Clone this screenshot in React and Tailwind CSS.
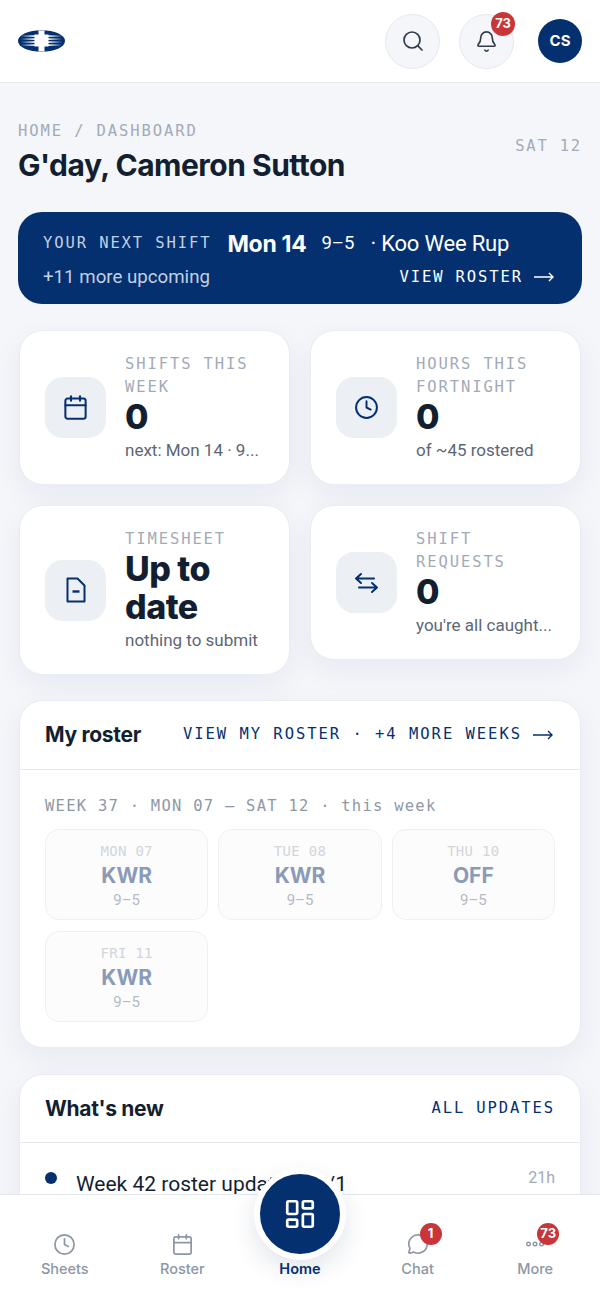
import React from "react";
import { Search, Bell, Calendar, Clock, LayoutDashboard, MessageCircle } from "lucide-react";

const mono = "font-['DejaVu_Sans_Mono',monospace]";
const sans = "font-['Roboto',sans-serif]";
const head = "font-['Inter',sans-serif]";

function Arrow({ className }) {
  return (
    <svg width="20" height="12" viewBox="0 0 20 12" fill="none" stroke="currentColor" strokeWidth="1.4" className={className}>
      <path d="M0 6h19M15 2l4 4-4 4" />
    </svg>
  );
}

function SwapIcon() {
  return (
    <svg width="25" height="22" viewBox="0 0 25 22" fill="none" stroke="#043070" strokeWidth="2" strokeLinecap="round" strokeLinejoin="round">
      <path d="M7 2 2 6.5 7 11M2 6.5h18M18 11l5 4.5L18 20M23 15.5H5" />
    </svg>
  );
}

function FileIcon() {
  return (
    <svg width="20" height="26" viewBox="0 0 20 26" fill="none" stroke="#043070" strokeWidth="2">
      <path d="M1.5 1.5h10l7 7v16h-17z" strokeLinejoin="round" />
      <path d="M6.5 14.5h7" strokeWidth="2.4" />
    </svg>
  );
}

function Logo() {
  return (
    <svg width="47" height="22" viewBox="0 0 47 22">
      <defs>
        <linearGradient id="fade" x1="0" x2="1" y1="0" y2="0">
          <stop offset="0.06" stopColor="#ffffff" stopOpacity="0" />
          <stop offset="0.38" stopColor="#ffffff" />
          <stop offset="0.62" stopColor="#ffffff" />
          <stop offset="0.94" stopColor="#ffffff" stopOpacity="0" />
        </linearGradient>
      </defs>
      <ellipse cx="23.5" cy="11" rx="23.5" ry="10.8" fill="#043070" />
      <rect x="0" y="5.2" width="47" height="1.8" fill="url(#fade)" />
      <rect x="0" y="8.2" width="47" height="1.8" fill="url(#fade)" />
      <rect x="0" y="11.2" width="47" height="1.8" fill="url(#fade)" />
      <rect x="0" y="14.2" width="47" height="1.8" fill="url(#fade)" />
      <path d="M20.5 0.6h6v4h4v12h-4v4.8h-6v-4.8h-4v-12h4z" fill="#ffffff" />
    </svg>
  );
}

function Badge({ children, className }) {
  return (
    <span className={`absolute flex items-center justify-center rounded-full bg-[#c9363a] text-white font-bold text-[13px] ${head} ${className}`}>
      {children}
    </span>
  );
}

function Stat({ icon, label, value, sub }) {
  return (
    <div className="flex min-w-0 items-center gap-[19px] rounded-[24px] border border-[#e9ecf2] bg-white px-[25px] py-[22px] shadow-[0_10px_30px_rgba(20,40,80,0.06)]">
      <div className="flex h-[61px] w-[61px] shrink-0 items-center justify-center rounded-[18px] bg-[#eceff4]">{icon}</div>
      <div className="min-w-0 flex-1">
        <div className={`${mono} text-[15.5px] leading-[23px] tracking-[1.9px] text-[#a3aab7]`}>{label}</div>
        <div className={`${head} -mt-[1px] text-[34px] font-extrabold leading-[38px] tracking-[-0.5px] text-[#131f30]`}>{value}</div>
        <div className={`${sans} mt-[2px] whitespace-nowrap text-[17px] leading-[24px] text-[#5d6675]`}>{sub}</div>
      </div>
    </div>
  );
}

function Day({ d, c }) {
  return (
    <div className="flex h-[91px] flex-col items-center rounded-[14px] border border-[#eef0f3] bg-[#fcfcfd] pt-[11px]">
      <div className={`${mono} text-[14px] leading-[20px] tracking-[0.3px] text-[#d2d5db]`}>{d}</div>
      <div className={`${head} text-[21px] font-bold leading-[30px] text-[#8a9ab7]`}>{c}</div>
      <div className={`${sans} -mt-[1px] text-[15px] leading-[20px] text-[#b5bac3]`}>9–5</div>
    </div>
  );
}

function NavItem({ icon, label, active, badge }) {
  return (
    <div className="relative flex flex-col items-center">
      <div className="relative flex h-[26px] items-center justify-center">
        {icon}
        {badge}
      </div>
      <div className={`${head} mt-[2px] text-[14.5px] leading-[20px] ${active ? "font-semibold text-[#043070]" : "font-medium text-[#8d96a6]"}`}>{label}</div>
    </div>
  );
}

export default function App() {
  return (
    <div className={`relative flex h-[1298px] w-[600px] flex-col overflow-hidden bg-[#f4f6fa] ${sans}`}>
      <header className="flex h-[83px] shrink-0 items-center border-b border-[#e5e8ee] bg-white px-[18px]">
        <Logo />
        <div className="ml-auto flex items-center">
          <button className="flex h-[55px] w-[55px] items-center justify-center rounded-full border border-[#e5e8ee] bg-[#f4f6fa] text-[#2f3a4a]">
            <Search size={24} strokeWidth={1.7} />
          </button>
          <button className="relative ml-[19px] flex h-[55px] w-[55px] items-center justify-center rounded-full border border-[#e5e8ee] bg-[#f4f6fa] text-[#2f3a4a]">
            <Bell size={23} strokeWidth={1.7} />
            <Badge className="right-[-2px] top-[-3px] h-[24px] w-[24px]">73</Badge>
          </button>
          <div className={`${head} ml-[24px] flex h-[44px] w-[44px] items-center justify-center rounded-full bg-[#043070] text-[15px] font-bold text-white`}>CS</div>
        </div>
      </header>

      <main className="flex min-h-0 flex-1 flex-col overflow-hidden px-[18px] pt-[37px]">
        <div className="flex items-center justify-between">
          <div>
            <div className={`${mono} text-[15.5px] leading-[22px] tracking-[1.9px] text-[#a3aab7]`}>HOME / DASHBOARD</div>
            <h1 className={`${head} mt-[5px] text-[30px] font-bold leading-[36px] tracking-[-0.5px] text-[#131f30]`}>G'day, Cameron Sutton</h1>
          </div>
          <div className={`${mono} mb-[10px] text-[15.5px] tracking-[1.8px] text-[#a3aab7]`}>SAT 12</div>
        </div>

        <div className="mt-[29px] flex h-[92px] shrink-0 flex-col justify-center gap-[2px] rounded-[24px] bg-[#043070] pl-[25px] pr-[28px] pt-[2px] text-white">
          <div className="flex items-center">
            <span className={`${mono} text-[15.5px] tracking-[1.9px] text-[#c3cfe2]`}>YOUR NEXT SHIFT</span>
            <span className={`${head} ml-[16px] text-[23px] font-bold tracking-[-0.3px]`}>Mon 14</span>
            <span className="ml-[15px] text-[18.5px]">9–5</span>
            <span className="ml-[16px] text-[22px] tracking-[-0.2px]">· Koo Wee Rup</span>
          </div>
          <div className="flex items-center justify-between">
            <span className="text-[18.7px] text-[#c3cfe2]">+11 more upcoming</span>
            <span className={`${mono} flex items-center gap-[11px] text-[15.5px] tracking-[1.9px]`}>VIEW ROSTER <Arrow /></span>
          </div>
        </div>

        <div className="mx-px mt-[26px] grid shrink-0 grid-cols-2 items-start gap-[20px]">
          <Stat icon={<Calendar size={27} strokeWidth={1.8} color="#043070" />} label="SHIFTS THIS WEEK" value="0" sub="next: Mon 14 · 9..." />
          <Stat icon={<Clock size={25} strokeWidth={1.9} color="#043070" />} label="HOURS THIS FORTNIGHT" value="0" sub="of ~45 rostered" />
          <Stat icon={<FileIcon />} label="TIMESHEET" value="Up to date" sub="nothing to submit" />
          <Stat icon={<SwapIcon />} label="SHIFT REQUESTS" value="0" sub="you're all caught..." />
        </div>

        <section className="mx-px mt-[25px] shrink-0 rounded-[24px] border border-[#e9ecf2] bg-white shadow-[0_10px_30px_rgba(20,40,80,0.06)]">
          <div className="flex h-[69px] items-center justify-between border-b border-[#e5e8ee] px-[25px]">
            <div className={`${head} text-[21px] font-bold tracking-[-0.3px] text-[#131f30]`}>My roster</div>
            <div className={`${mono} flex items-center gap-[11px] pr-[2px] text-[15.5px] tracking-[1.97px] text-[#043070]`}>VIEW MY ROSTER · +4 MORE WEEKS <Arrow /></div>
          </div>
          <div className="px-[25px] pb-[25px] pt-[24px]">
            <div className={`${mono} text-[15.5px] leading-[24px] tracking-[1.25px] text-[#8f97a7]`}>WEEK 37 · MON 07 – SAT 12 · this week</div>
            <div className="mt-[11px] grid grid-cols-3 gap-x-[10px] gap-y-[11px]">
              <Day d="MON 07" c="KWR" />
              <Day d="TUE 08" c="KWR" />
              <Day d="THU 10" c="OFF" />
              <Day d="FRI 11" c="KWR" />
            </div>
          </div>
        </section>

        <section className="mx-px mt-[26px] shrink-0 rounded-[24px] border border-[#e9ecf2] bg-white shadow-[0_10px_30px_rgba(20,40,80,0.06)]">
          <div className="flex h-[68px] items-center justify-between border-b border-[#e5e8ee] px-[25px]">
            <div className={`${head} text-[21px] font-bold tracking-[-0.3px] text-[#131f30]`}>What's new</div>
            <div className={`${mono} text-[15.5px] tracking-[1.9px] text-[#043070]`}>ALL UPDATES</div>
          </div>
          <div className="flex items-start px-[25px] pb-[60px] pt-[23px]">
            <span className="mt-[6px] h-[12px] w-[12px] shrink-0 rounded-full bg-[#043070]" />
            <span className="ml-[19px] text-[21px] leading-[36px] text-[#131f30]">Week 42 roster updated 11/1</span>
            <span className="ml-auto text-[16px] text-[#a3aab7]">21h</span>
          </div>
        </section>
      </main>

      <nav className="relative z-10 grid h-[104px] shrink-0 grid-cols-5 border-t border-[#e5e8ee] bg-white px-[6px] pt-[36px]">
        <NavItem icon={<Clock size={23} strokeWidth={1.8} color="#8d96a6" />} label="Sheets" />
        <NavItem icon={<Calendar size={23} strokeWidth={1.8} color="#8d96a6" />} label="Roster" />
        <NavItem active icon={<span className="h-[26px]" />} label="Home" />
        <NavItem
          icon={<MessageCircle size={22} strokeWidth={1.8} color="#8d96a6" />}
          label="Chat"
          badge={<Badge className="left-[13px] top-[-8px] h-[22px] w-[22px]">1</Badge>}
        />
        <NavItem
          icon={
            <svg width="18" height="8" viewBox="0 0 18 8" fill="none" stroke="#8d96a6" strokeWidth="1.4">
              <circle cx="2.5" cy="4" r="1.8" />
              <circle cx="9" cy="4" r="1.8" />
              <circle cx="15.5" cy="4" r="1.8" />
            </svg>
          }
          label="More"
          badge={<Badge className="left-[11px] top-[-8px] h-[22px] w-[22px]">73</Badge>}
        />
        <div className="absolute left-[254px] top-[-27px] flex h-[92px] w-[92px] items-center justify-center rounded-full border-[6px] border-white bg-[#043070] text-white shadow-[0_10px_24px_rgba(20,40,80,0.12)]">
          <LayoutDashboard size={34} strokeWidth={1.9} />
        </div>
      </nav>
    </div>
  );
}
